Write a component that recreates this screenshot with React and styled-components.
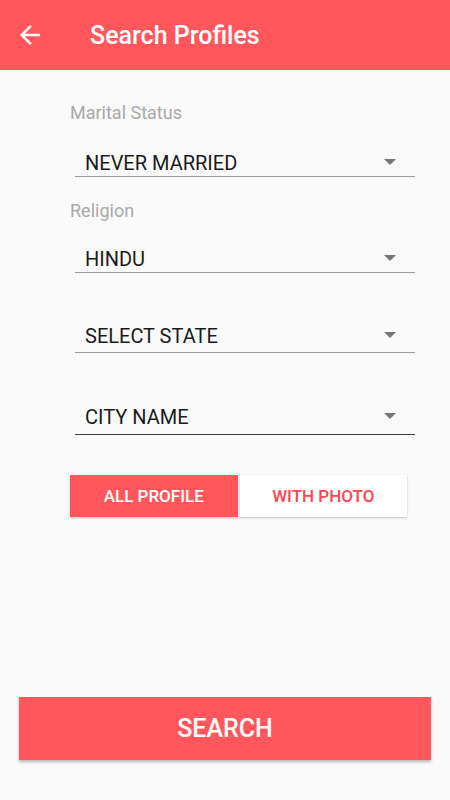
import React, { useState } from "react";
import styled, { createGlobalStyle } from "styled-components";

const Global = createGlobalStyle`
  html, body { margin: 0; padding: 0; background: #fafafa; }
  body { font-family: Roboto, "Noto Sans", "Liberation Sans", sans-serif; }
  * { box-sizing: border-box; }
`;

const RED = "#ff575c";

const Page = styled.div`
  min-height: 100vh;
  display: flex;
  flex-direction: column;
  background: #fafafa;
`;

const AppBar = styled.header`
  height: 70px;
  background: ${RED};
  display: flex;
  align-items: center;
  padding-left: 15px;
  flex-shrink: 0;
`;

const BackButton = styled.button`
  width: 30px;
  height: 30px;
  padding: 0;
  border: 0;
  background: transparent;
  display: flex;
  align-items: center;
  justify-content: center;
  cursor: pointer;
`;

const Title = styled.h1`
  margin: 2px 0 0 45px;
  color: #fff;
  font-size: 25px;
  font-weight: 500;
  line-height: 28px;
`;

const Form = styled.div`
  margin-left: 70px;
  width: 345px;
  display: flex;
  flex-direction: column;
`;

const Label = styled.div`
  margin-top: ${(p) => p.$mt}px;
  font-size: 18px;
  line-height: 20px;
  color: #a9a9a9;
`;

const Spinner = styled.div`
  margin-top: ${(p) => p.$mt}px;
  margin-left: 5px;
  display: flex;
  align-items: center;
  justify-content: space-between;
  padding: 0 19px ${(p) => p.$pb}px 10px;
  border-bottom: 1px solid ${(p) => (p.$active ? "#3a3a3a" : "#9a9a9a")};
  cursor: pointer;
`;

const SpinnerText = styled.span`
  font-size: 20px;
  line-height: 24px;
  color: #1a1a1a;
`;

const Caret = styled.span`
  width: 0;
  height: 0;
  border-left: 6px solid transparent;
  border-right: 6px solid transparent;
  border-top: 6px solid #767676;
  margin-top: -2px;
`;

const Toggle = styled.div`
  margin-top: 40px;
  display: flex;
  gap: 2px;
  width: 337px;
`;

const ToggleButton = styled.button`
  flex: 1;
  height: 42px;
  border: 0;
  padding: 0;
  font-family: inherit;
  font-size: 17px;
  font-weight: 500;
  background: ${(p) => (p.$on ? RED : "#ffffff")};
  color: ${(p) => (p.$on ? "#ffffff" : "#ff4450")};
  box-shadow: 0 1px 2px rgba(0, 0, 0, 0.22);
  cursor: pointer;
`;

const Spacer = styled.div`
  flex: 1;
`;

const SearchButton = styled.button`
  margin: 0 19px 40px;
  height: 63px;
  border: 0;
  background: ${RED};
  color: #fff;
  font-family: inherit;
  font-size: 25px;
  font-weight: 500;
  box-shadow: 0 2px 3px rgba(0, 0, 0, 0.28);
  cursor: pointer;
`;

const BackIcon = () => (
  <svg width="30" height="30" viewBox="0 0 24 24" fill="#fff">
    <path d="M20 11H7.83l5.59-5.59L12 4l-8 8 8 8 1.41-1.41L7.83 13H20v-2z" />
  </svg>
);

const fields = [
  { label: "Marital Status", value: "NEVER MARRIED", lmt: 33, smt: 28, pb: 1 },
  { label: "Religion", value: "HINDU", lmt: 24, smt: 26, pb: 1 },
  { value: "SELECT STATE", smt: 51, pb: 4 },
  { value: "CITY NAME", smt: 52, pb: 5, active: true },
];

export default function App() {
  const [mode, setMode] = useState("all");
  return (
    <Page>
      <Global />
      <AppBar>
        <BackButton aria-label="Back">
          <BackIcon />
        </BackButton>
        <Title>Search Profiles</Title>
      </AppBar>
      <Form>
        {fields.map((f) => (
          <React.Fragment key={f.value}>
            {f.label && <Label $mt={f.lmt}>{f.label}</Label>}
            <Spinner $mt={f.smt} $pb={f.pb} $active={f.active}>
              <SpinnerText>{f.value}</SpinnerText>
              <Caret />
            </Spinner>
          </React.Fragment>
        ))}
        <Toggle>
          <ToggleButton $on={mode === "all"} onClick={() => setMode("all")}>
            ALL PROFILE
          </ToggleButton>
          <ToggleButton $on={mode === "photo"} onClick={() => setMode("photo")}>
            WITH PHOTO
          </ToggleButton>
        </Toggle>
      </Form>
      <Spacer />
      <SearchButton>SEARCH</SearchButton>
    </Page>
  );
}
